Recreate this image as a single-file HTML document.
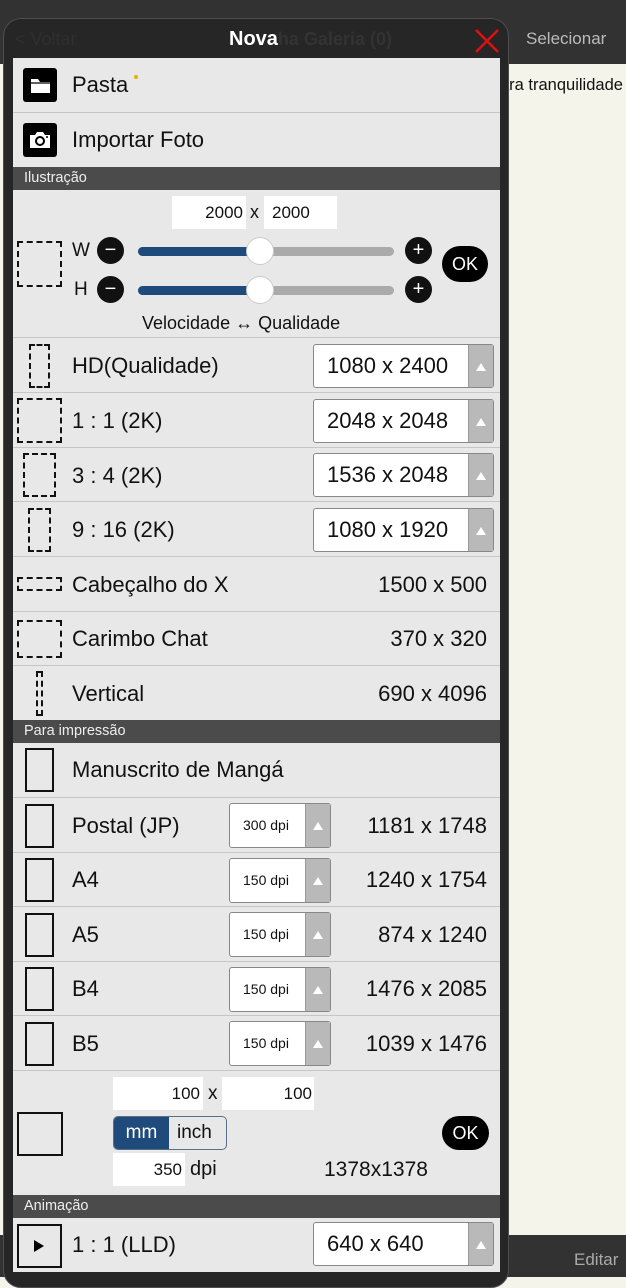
<!DOCTYPE html>
<html><head><meta charset="utf-8"><style>
*{margin:0;padding:0;box-sizing:border-box}
body{width:626px;height:1277px;position:relative;overflow:hidden;background:#f5f4ea;font-family:"Liberation Sans",sans-serif;color:#111}
.a{position:absolute}
.row{position:absolute;left:13px;width:487px;background:#e8e8e8;border-top:1.5px solid #c6c6c6}
.lbl{position:absolute;left:59px;font-size:22px;line-height:26px}
.hdr{position:absolute;left:13px;width:487px;height:23px;background:#4b4b4b;color:#eee;font-size:14.5px;line-height:22px;padding-left:11px;z-index:2}
.dash{position:absolute;border:2px dashed #111}
.sol{position:absolute;left:12px;width:29px;height:44px;border:2.5px solid #111}
.sel{position:absolute;left:300px;width:181px;height:44px;background:#fff;border:1px solid #888;border-radius:3px;font-size:22px;line-height:42px;padding-left:13px}
.sel i,.dsel i{position:absolute;right:0;top:0;bottom:0;width:25px;background:#b9b9b9;border-left:1px solid #999}
.sel i:after,.dsel i:after{content:"";position:absolute;left:7px;top:18px;border-left:5.5px solid transparent;border-right:5.5px solid transparent;border-bottom:8px solid #fff}
.dsel{position:absolute;left:216px;width:102px;height:45px;background:#fff;border:1px solid #888;border-radius:3px;font-size:14px;line-height:43px;padding-left:13px}
.val{position:absolute;right:13px;font-size:22px;line-height:26px}
.circ{position:absolute;width:27px;height:27px;border-radius:50%;background:#111;color:#fff;text-align:center;font-size:20px;line-height:26px}
.ok{position:absolute;width:46px;height:36px;border-radius:18px;background:#000;color:#fff;font-size:18px;line-height:36px;text-align:center}
.inp{position:absolute;background:#fff;font-size:17px;line-height:33px;text-align:right;padding-right:3px}
</style></head><body>
<div class="a" style="left:0;top:0;width:626px;height:64px;background:#323232"></div>
<div class="a" style="left:526px;top:29px;color:#bbb;font-size:17px">Selecionar</div>
<div class="a" style="left:500px;top:76px;font-size:16.5px;color:#111">ara tranquilidade</div>
<div class="a" style="left:0;top:1235px;width:626px;height:42px;background:#323232"></div>
<div class="a" style="left:574px;top:1250px;color:#aaa;font-size:17px">Editar</div>

<div class="a" style="left:3px;top:18px;width:506px;height:1270px;background:#262626;border:1.5px solid #4e4e4e;border-radius:18px"></div>
<div class="a" style="left:15px;top:29px;color:#2f2f2f;font-size:18px">&lt; Voltar</div>
<div class="a" style="left:229px;top:28px;font-size:20px;font-weight:bold;color:#fff">Nova<span style="color:#333;font-weight:bold;font-size:18px">ha Galeria (0)</span></div>
<svg class="a" style="left:474px;top:28px" width="26" height="26"><path d="M2 2L24 24M24 2L2 24" stroke="#e01010" stroke-width="2.5"/></svg>

<div class="row" style="top:58px;height:55px;border-top:none">
 <div class="a" style="left:10px;top:10px;width:34px;height:34px;background:#000;border-radius:3px"><svg width="34" height="34"><path d="M8 11h7l2 3h10v11H8z" fill="#fff"/><path d="M8 15h19" stroke="#000" stroke-width="1.2"/></svg></div>
 <div class="lbl" style="top:14px">Pasta</div><div class="a" style="left:121px;top:17px;width:4px;height:4px;border-radius:50%;background:#e8b000"></div></div>
<div class="row" style="top:112px;height:55px">
 <div class="a" style="left:10px;top:10px;width:34px;height:34px;background:#000;border-radius:3px"><svg width="34" height="34"><path d="M7 12h5l2-3h6l2 3h5v13H7z" fill="#fff"/><circle cx="17" cy="18" r="4" fill="none" stroke="#000" stroke-width="2"/><circle cx="24" cy="14" r="1" fill="#000"/></svg></div>
 <div class="lbl" style="top:14px">Importar Foto</div></div>
<div class="hdr" style="top:167px">Ilustração</div>

<div class="row" style="top:190px;height:148px;border-top:none">
 <div class="inp" style="left:159px;top:6px;width:74px">2000</div>
 <div class="a" style="left:237px;top:12px;font-size:18px">x</div>
 <div class="inp" style="left:251px;top:6px;width:73px;text-align:left;padding-left:8px">2000</div>
 <div class="dash" style="left:4px;top:51px;width:45px;height:46px"></div>
 <div class="a" style="left:59px;top:50px;font-size:19px">W</div>
 <div class="a" style="left:61px;top:89px;font-size:19px">H</div>
 <div class="circ" style="left:84px;top:47px">−</div><div class="circ" style="left:84px;top:86px">−</div>
 <div class="circ" style="left:392px;top:47px">+</div><div class="circ" style="left:392px;top:86px">+</div>
 <div class="a" style="left:125px;top:57px;width:256px;height:9px;border-radius:5px;background:#aaa"></div>
 <div class="a" style="left:125px;top:57px;width:122px;height:9px;border-radius:5px;background:#1f4a7c"></div>
 <div class="a" style="left:125px;top:96px;width:256px;height:9px;border-radius:5px;background:#aaa"></div>
 <div class="a" style="left:125px;top:96px;width:122px;height:9px;border-radius:5px;background:#1f4a7c"></div>
 <div class="a" style="left:233px;top:47px;width:28px;height:28px;border-radius:50%;background:#fff;border:1px solid #ccc"></div>
 <div class="a" style="left:233px;top:86px;width:28px;height:28px;border-radius:50%;background:#fff;border:1px solid #ccc"></div>
 <div class="ok" style="left:429px;top:56px">OK</div>
 <div class="a" style="left:129px;top:123px;font-size:18px">Velocidade ↔ Qualidade</div>
</div>

<div class="row" style="top:337px;height:56px"><div class="dash" style="left:16px;top:6px;width:21px;height:44px"></div><div class="lbl" style="top:15px">HD(Qualidade)</div><div class="sel" style="top:6px">1080 x 2400<i></i></div></div>
<div class="row" style="top:392px;height:56px"><div class="dash" style="left:4px;top:5px;width:45px;height:45px"></div><div class="lbl" style="top:15px">1 : 1 (2K)</div><div class="sel" style="top:6px">2048 x 2048<i></i></div></div>
<div class="row" style="top:447px;height:55px"><div class="dash" style="left:10px;top:5px;width:33px;height:44px"></div><div class="lbl" style="top:15px">3 : 4 (2K)</div><div class="sel" style="top:5px">1536 x 2048<i></i></div></div>
<div class="row" style="top:501px;height:56px"><div class="dash" style="left:15px;top:6px;width:23px;height:44px"></div><div class="lbl" style="top:15px">9 : 16 (2K)</div><div class="sel" style="top:6px">1080 x 1920<i></i></div></div>
<div class="row" style="top:556px;height:56px"><div class="dash" style="left:4px;top:20px;width:45px;height:14px"></div><div class="lbl" style="top:15px">Cabeçalho do X</div><div class="val" style="top:15px">1500 x 500</div></div>
<div class="row" style="top:611px;height:55px"><div class="dash" style="left:4px;top:8px;width:45px;height:38px"></div><div class="lbl" style="top:14px">Carimbo Chat</div><div class="val" style="top:14px">370 x 320</div></div>
<div class="row" style="top:665px;height:56px"><div class="dash" style="left:23px;top:5px;width:7px;height:45px"></div><div class="lbl" style="top:15px">Vertical</div><div class="val" style="top:15px">690 x 4096</div></div>
<div class="hdr" style="top:720px">Para impressão</div>

<div class="row" style="top:742px;height:56px;border-top:none"><div class="sol" style="top:6px"></div><div class="lbl" style="top:15px">Manuscrito de Mangá</div></div>
<div class="row" style="top:797px;height:56px"><div class="sol" style="top:6px"></div><div class="lbl" style="top:15px">Postal (JP)</div><div class="dsel" style="top:5px">300 dpi<i></i></div><div class="val" style="top:15px">1181 x 1748</div></div>
<div class="row" style="top:852px;height:55px"><div class="sol" style="top:5px"></div><div class="lbl" style="top:14px">A4</div><div class="dsel" style="top:5px">150 dpi<i></i></div><div class="val" style="top:14px">1240 x 1754</div></div>
<div class="row" style="top:906px;height:56px"><div class="sol" style="top:6px"></div><div class="lbl" style="top:15px">A5</div><div class="dsel" style="top:5px">150 dpi<i></i></div><div class="val" style="top:15px">874 x 1240</div></div>
<div class="row" style="top:961px;height:55px"><div class="sol" style="top:5px"></div><div class="lbl" style="top:14px">B4</div><div class="dsel" style="top:5px">150 dpi<i></i></div><div class="val" style="top:14px">1476 x 2085</div></div>
<div class="row" style="top:1015px;height:56px"><div class="sol" style="top:6px"></div><div class="lbl" style="top:15px">B5</div><div class="dsel" style="top:5px">150 dpi<i></i></div><div class="val" style="top:15px">1039 x 1476</div></div>

<div class="row" style="top:1070px;height:126px">
 <div class="a" style="left:4px;top:41px;width:46px;height:44px;border:2.5px solid #111"></div>
 <div class="inp" style="left:100px;top:6px;width:90px">100</div>
 <div class="a" style="left:195px;top:12px;font-size:19px">x</div>
 <div class="inp" style="left:209px;top:6px;width:92px;padding-right:2px">100</div>
 <div class="a" style="left:100px;top:45px;width:114px;height:34px;border:1px solid #5a6f8a;border-radius:5px;background:#e8e8e8;overflow:hidden">
  <div class="a" style="left:0;top:0;width:55px;height:34px;background:#1f4a7c;color:#fff;font-size:19px;line-height:31px;text-align:center">mm</div>
  <div class="a" style="left:63px;top:0;font-size:19px;line-height:31px">inch</div></div>
 <div class="inp" style="left:100px;top:82px;width:72px">350</div>
 <div class="a" style="left:177px;top:87px;font-size:20px">dpi</div>
 <div class="a" style="left:311px;top:87px;font-size:21px">1378x1378</div>
 <div class="ok" style="left:429px;top:45px;width:47px;height:34px;line-height:34px">OK</div>
</div>
<div class="hdr" style="top:1195px">Animação</div>
<div class="row" style="top:1217px;height:55px;border-top:none">
 <div class="a" style="left:4px;top:7px;width:45px;height:44px;border:2px solid #111"><svg width="41" height="40"><path d="M15 14l10 6-10 6z" fill="#000"/></svg></div>
 <div class="lbl" style="top:15px">1 : 1 (LLD)</div>
 <div class="sel" style="top:5px">640 x 640<i></i></div></div>
</body></html>
